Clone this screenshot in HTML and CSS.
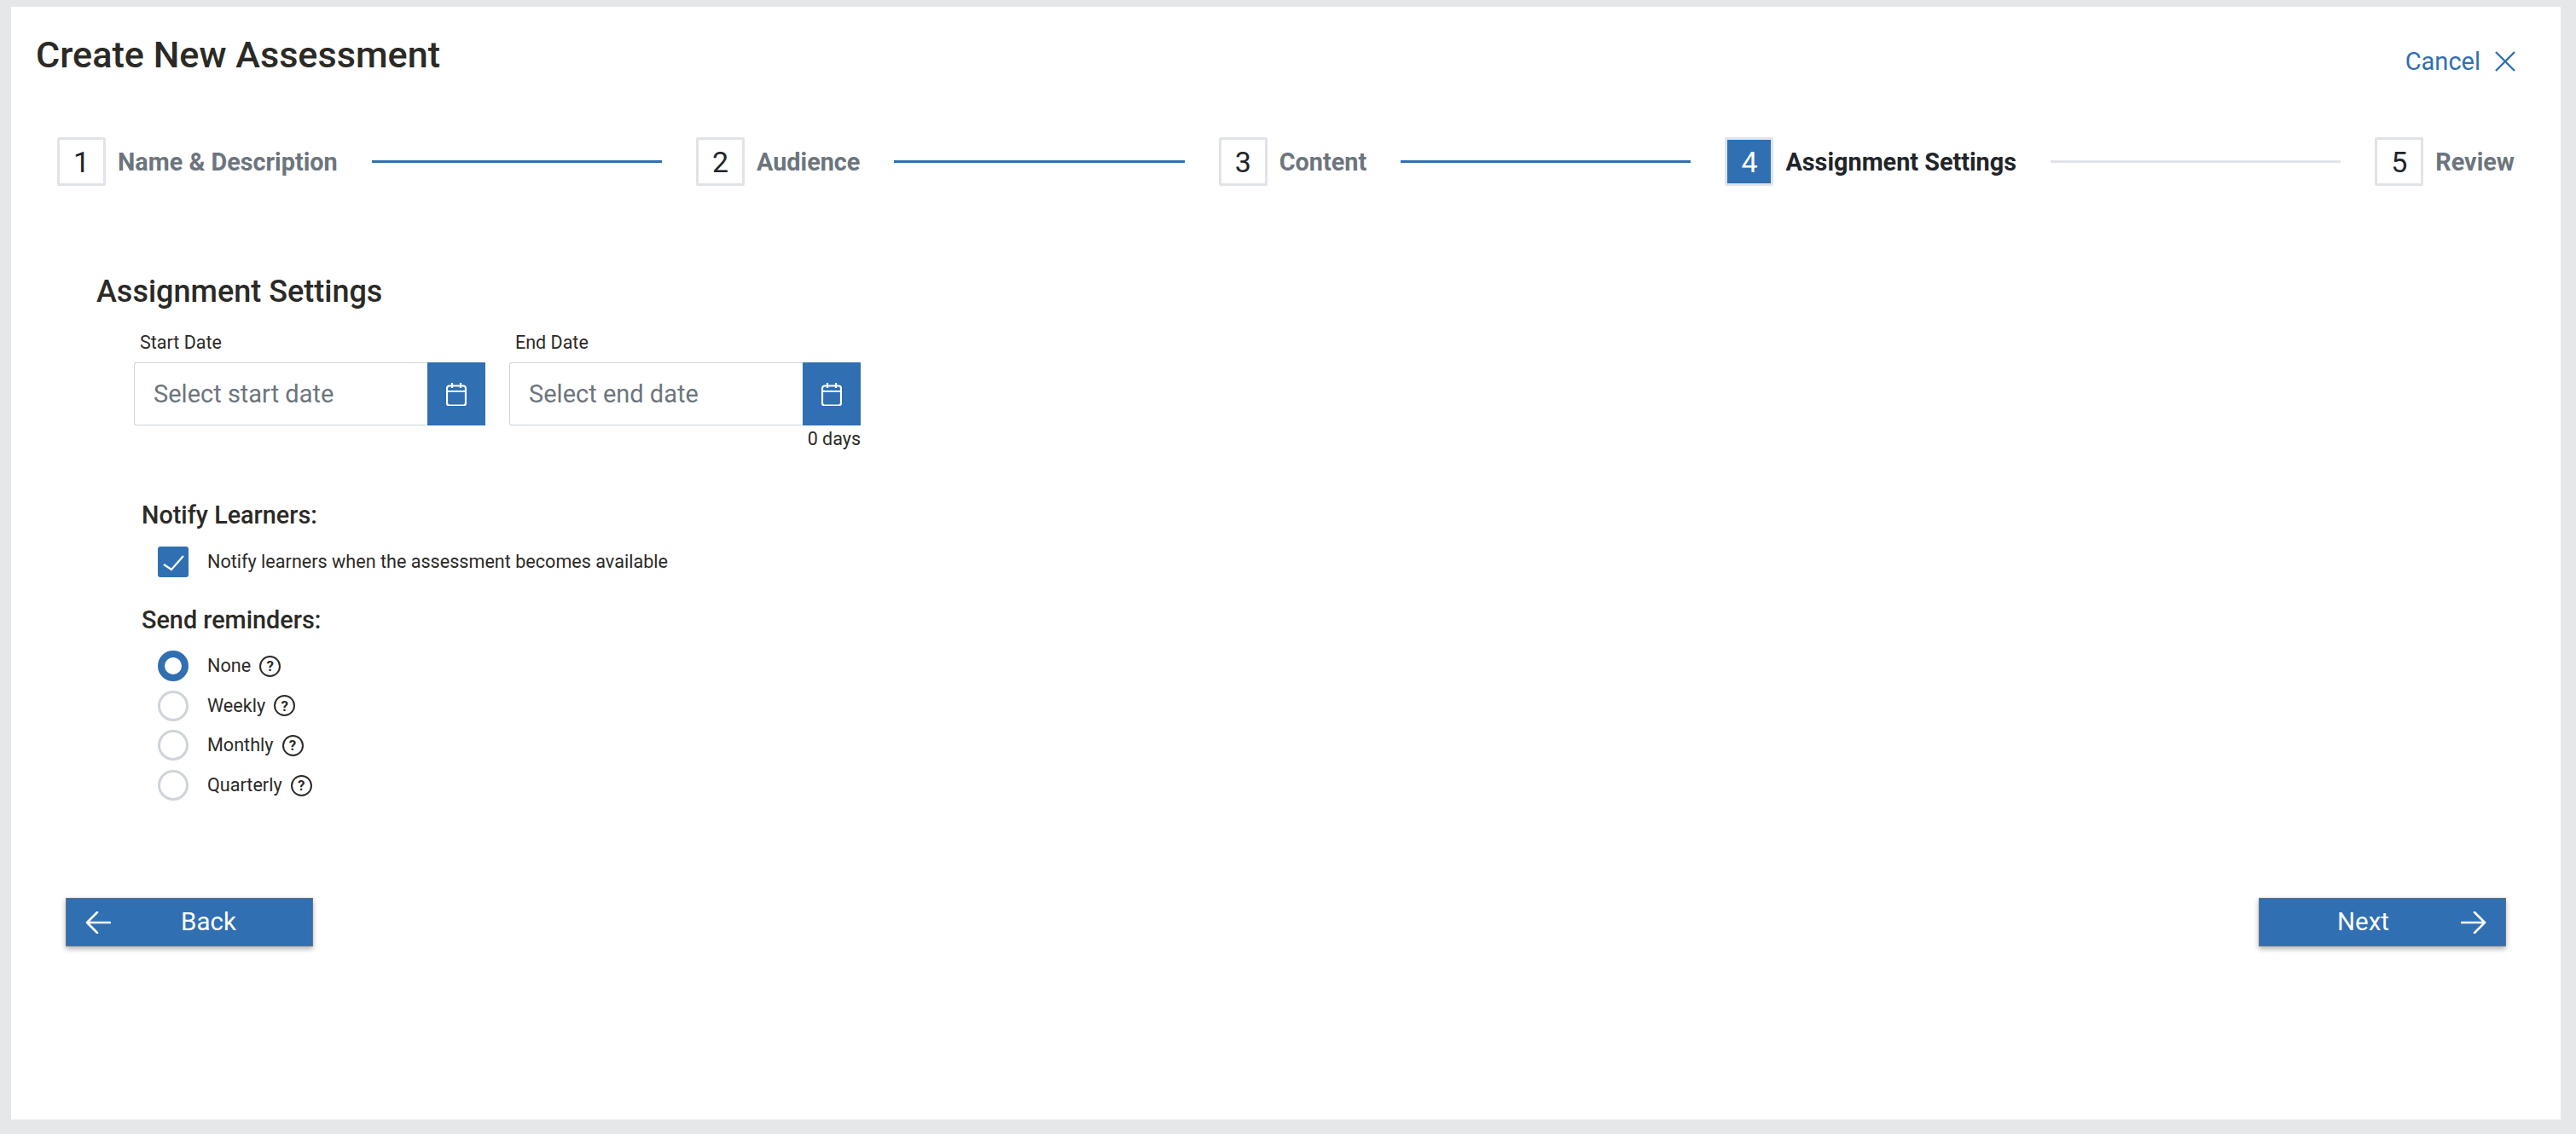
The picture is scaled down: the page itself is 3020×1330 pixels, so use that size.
FILE: index.html
```html
<!DOCTYPE html>
<html lang="en">
<head>
<meta charset="utf-8">
<title>Create New Assessment</title>
<link rel="stylesheet" href="styles.css">
</head>
<body>
<main class="panel">
  <header class="top">
    <h1 class="title">Create New Assessment</h1>
    <a class="cancel">Cancel
      <svg class="cancel-icon" viewBox="0 0 24 24"><path d="M1 1l22 22M23 1L1 23"/></svg>
    </a>
  </header>

  <ol class="stepper">
    <li class="step"><span class="step-num">1</span><span class="step-label">Name &amp; Description</span></li>
    <li class="rule rule-done"></li>
    <li class="step"><span class="step-num">2</span><span class="step-label">Audience</span></li>
    <li class="rule rule-done"></li>
    <li class="step"><span class="step-num">3</span><span class="step-label">Content</span></li>
    <li class="rule rule-done"></li>
    <li class="step step-active"><span class="step-num">4</span><span class="step-label">Assignment Settings</span></li>
    <li class="rule"></li>
    <li class="step"><span class="step-num">5</span><span class="step-label">Review</span></li>
  </ol>

  <section class="settings">
    <h2 class="heading">Assignment Settings</h2>
    <div class="dates">
      <div class="date-field">
        <label class="date-label">Start Date</label>
        <div class="date-input">
          <span class="placeholder">Select start date</span>
          <span class="cal-btn"><svg class="cal-icon" viewBox="0 0 24 28"><path d="M4 4.5h16a3 3 0 0 1 3 3v17a3 3 0 0 1-3 3H4a3 3 0 0 1-3-3v-17a3 3 0 0 1 3-3zM1 11h22M7 1v6M17 1v6"/></svg></span>
        </div>
      </div>
      <div class="date-field">
        <label class="date-label">End Date</label>
        <div class="date-input">
          <span class="placeholder">Select end date</span>
          <span class="cal-btn"><svg class="cal-icon" viewBox="0 0 24 28"><path d="M4 4.5h16a3 3 0 0 1 3 3v17a3 3 0 0 1-3 3H4a3 3 0 0 1-3-3v-17a3 3 0 0 1 3-3zM1 11h22M7 1v6M17 1v6"/></svg></span>
        </div>
        <div class="days">0 days</div>
      </div>
    </div>

    <div class="options">
      <h3 class="opt-title">Notify Learners:</h3>
      <div class="check-row">
        <span class="checkbox"><svg class="check-icon" viewBox="0 0 36 36"><path d="M7 21l9 6L30 11"/></svg></span>
        <span class="opt-text">Notify learners when the assessment becomes available</span>
      </div>
      <h3 class="opt-title opt-title-second">Send reminders:</h3>
      <div class="radios">
        <div class="radio-row"><span class="radio radio-on"></span><span class="opt-text">None</span><span class="help">?</span></div>
        <div class="radio-row"><span class="radio"></span><span class="opt-text">Weekly</span><span class="help">?</span></div>
        <div class="radio-row"><span class="radio"></span><span class="opt-text">Monthly</span><span class="help">?</span></div>
        <div class="radio-row"><span class="radio"></span><span class="opt-text">Quarterly</span><span class="help">?</span></div>
      </div>
    </div>
  </section>

  <footer class="actions">
    <button class="nav-btn nav-back">
      <svg class="arrow" viewBox="0 0 30 26"><path d="M29 13H2M14 1L2 13l12 12"/></svg>
      <span class="nav-label">Back</span>
    </button>
    <button class="nav-btn nav-next">
      <span class="nav-label">Next</span>
      <svg class="arrow" viewBox="0 0 30 26"><path d="M1 13h27M16 1l12 12-12 12"/></svg>
    </button>
  </footer>
</main>
</body>
</html>
```
FILE: styles.css
```css
* { box-sizing: border-box; }
html, body { margin: 0; height: 100%; }
body {
  background: #e6e7e9;
  font-family: Roboto, "Liberation Sans", sans-serif;
  color: #2b2a26;
}
.panel {
  margin: 8px 18px 0 13px;
  height: 1305px;
  background: #fff;
  overflow: hidden;
}
.top {
  display: flex;
  justify-content: space-between;
  align-items: flex-start;
  padding: 29px 53px 0 29px;
  height: 153px;
}
.title {
  margin: 0;
  font-size: 43.2px;
  line-height: 56px;
  font-weight: 500;
  color: #2b2a26;
}
.cancel {
  display: flex;
  align-items: center;
  gap: 17px;
  margin-top: 17px;
  font-size: 29px;
  line-height: 36px;
  color: #2f6fb2;
}
.cancel-icon { width: 24px; height: 24px; fill: none; stroke: #2f6fb2; stroke-width: 2.4; }

.stepper {
  display: flex;
  align-items: center;
  list-style: none;
  margin: 0 54px;
  padding: 0;
  height: 57px;
}
.step { display: flex; align-items: center; gap: 14px; }
.step-num {
  width: 57px;
  height: 57px;
  display: flex;
  align-items: center;
  justify-content: center;
  border: 3px solid #e0e3e8;
  border-radius: 2px;
  background: #fff;
  font-size: 34px;
  color: #212529;
}
.step-label { font-size: 28.8px; font-weight: 700; color: #6c757d; }
.step-active .step-num { background: #2f6fb2; color: #fff; }
.step-active .step-label { color: #212529; }
.rule { flex: 1; height: 3px; margin: 0 40px; background: #e0e3e8; }
.rule-done { background: #2f6fb2; }

.settings { margin-left: 100px; }
.heading {
  margin: 102px 0 0;
  font-size: 36px;
  line-height: 44px;
  font-weight: 500;
  color: #2b2a26;
}
.dates { display: flex; gap: 28px; margin: 25px 0 0 44px; }
.date-field { display: flex; flex-direction: column; width: 412px; }
.date-label { font-size: 21.5px; line-height: 26px; padding-left: 7px; color: #2b2a26; margin-bottom: 10px; }
.date-input {
  display: flex;
  height: 74px;
  border: 1px solid #ced4da;
  border-right: 0;
  border-radius: 3px 0 0 3px;
}
.placeholder {
  flex: 1;
  display: flex;
  align-items: center;
  padding-left: 22px;
  font-size: 29px;
  color: #6c757d;
}
.cal-btn {
  width: 68px;
  margin: -1px 0;
  display: flex;
  align-items: center;
  justify-content: center;
  background: #2f6fb2;
}
.cal-icon { width: 24px; height: 28px; fill: none; stroke: #fff; stroke-width: 2.2; }
.days { margin-top: 3px; text-align: right; font-size: 21.5px; line-height: 26px; color: #2b2a26; }

.options { margin: 58px 0 0 53px; }
.opt-title { margin: 0; font-size: 28.8px; line-height: 36px; font-weight: 500; color: #2b2a26; }
.opt-title-second { margin-top: 32px; }
.check-row { display: flex; align-items: center; gap: 22px; margin: 19px 0 0 19px; }
.checkbox {
  width: 36px;
  height: 36px;
  display: flex;
  border-radius: 3px;
  background: #2f6fb2;
}
.check-icon { width: 36px; height: 36px; fill: none; stroke: #fff; stroke-width: 2.2; }
.opt-text { font-size: 21.6px; line-height: 26px; color: #2b2a26; }
.radios { display: flex; flex-direction: column; gap: 10.7px; margin: 18px 0 0 19px; }
.radio-row { display: flex; align-items: center; height: 36px; }
.radio {
  width: 36px;
  height: 36px;
  margin-right: 22px;
  border: 3px solid #ced4da;
  border-radius: 50%;
  background: #fff;
}
.radio-on { border: 8px solid #2f6fb2; }
.help {
  width: 25px;
  height: 25px;
  margin-left: 10px;
  display: flex;
  align-items: center;
  justify-content: center;
  border: 2px solid #2b2a26;
  border-radius: 50%;
  font-size: 17px;
  font-weight: 700;
  color: #2b2a26;
}

.actions {
  display: flex;
  justify-content: space-between;
  margin: 114px 64px 0;
}
.nav-btn {
  width: 290px;
  height: 57px;
  display: flex;
  align-items: center;
  justify-content: space-between;
  padding: 0 22px;
  border: 1px solid #6c757d;
  background: #2f6fb2;
  box-shadow: 0 3px 6px rgba(0, 0, 0, .3);
  font-family: inherit;
  color: #fff;
}
.nav-label { flex: 1; text-align: center; font-size: 29.5px; line-height: 34px; margin-bottom: 2px; }
.nav-back .nav-label { margin-left: 15px; }
.nav-next .nav-label { margin-right: 15px; }
.arrow { width: 30px; height: 26px; fill: none; stroke: #fff; stroke-width: 2.6; stroke-linecap: round; stroke-linejoin: round; }
```
